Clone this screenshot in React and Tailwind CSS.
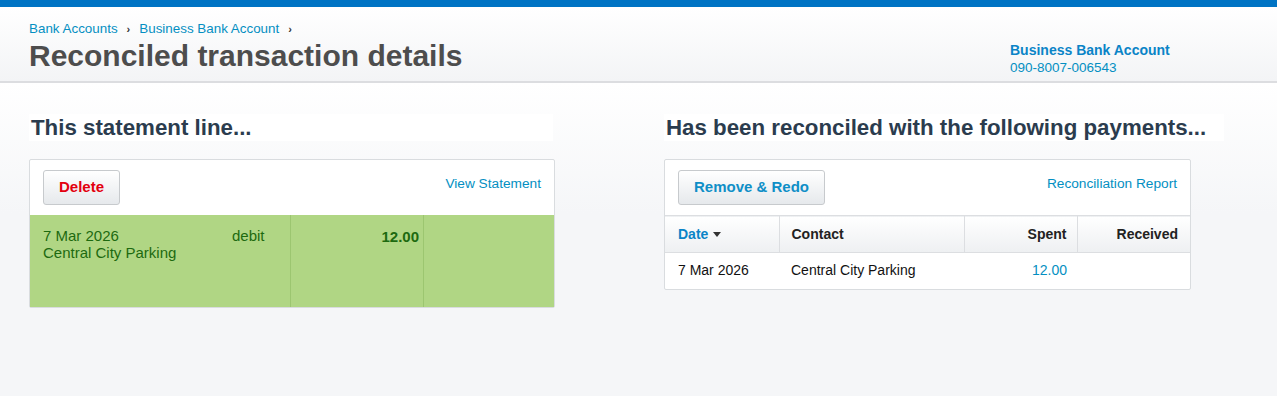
import { useState } from 'react';

const SANS = { fontFamily: '"Liberation Sans", Arial, sans-serif' };

function Breadcrumb() {
  return (
    <div className="flex items-center text-[13.4px] text-[#048fc2] leading-[16px]">
      <a className="hover:underline" href="#">Bank Accounts</a>
      <span className="mx-[9px] text-[#333] text-[11px] font-bold">›</span>
      <a className="hover:underline" href="#">Business Bank Account</a>
      <span className="mx-[9px] text-[#333] text-[11px] font-bold">›</span>
    </div>
  );
}

function Button({ children, color }) {
  return (
    <button
      className={`h-[35px] px-[15px] rounded-[3px] border border-[#c7cacd] bg-gradient-to-b from-white to-[#e6e9ec] text-[15px] font-bold ${color}`}
    >
      {children}
    </button>
  );
}

export default function App() {
  const [sortDesc] = useState(true);

  return (
    <div className="min-h-[396px] bg-[#f5f6f8]" style={SANS}>
      <div className="h-[7px] bg-[#0074c4]" />

      {/* Page header */}
      <div className="h-[76px] border-b-2 border-[#dcdde0] bg-gradient-to-b from-white to-[#f3f4f6] flex justify-between">
        <div className="pl-[29px] pt-[14px]">
          <Breadcrumb />
          <h1 className="mt-[2px] text-[30px] font-bold leading-[34px] text-[#4d4d4d]">
            Reconciled transaction details
          </h1>
        </div>
        <div className="w-[267px] pt-[34px] leading-[18px] text-[#048fc2]">
          <p className="font-bold text-[14px] text-[#0a84c7]">Business Bank Account</p>
          <p className="text-[13.5px]">090-8007-006543</p>
        </div>
      </div>

      <div className="h-[313px] bg-[linear-gradient(to_bottom,#ffffff,#f5f6f8_130px)] flex gap-[109px] pl-[29px] pt-[31px]">
        {/* Statement line */}
        <div className="w-[526px]">
          <div className="bg-white w-[524px] h-[27px] pl-[2px] flex items-center">
            <h2 className="text-[22.3px] font-bold text-[#2b3c4e]">This statement line...</h2>
          </div>
          <div className="mt-[18px] border border-[#d9dcdf] rounded-[2px] bg-white">
            <div className="h-[55px] flex justify-between items-start px-[13px] pt-[10px]">
              <Button color="text-[#e3000f]">Delete</Button>
              <a href="#" className="mt-[4px] text-[13.7px] text-[#048fc2]">View Statement</a>
            </div>
            <div className="h-[92px] bg-[#b0d684] flex text-[#1d6a10] text-[15px] leading-[17px]">
              <div className="w-[261px] border-r border-[#9cc670] pl-[13px] pt-[12px] flex">
                <div className="w-[189px]">
                  <p>7 Mar 2026</p>
                  <p>Central City Parking</p>
                </div>
                <p>debit</p>
              </div>
              <div className="w-[133px] border-r border-[#9cc670] pr-[4px] pt-[13px] text-right font-bold text-[15px]">
                12.00
              </div>
              <div className="flex-1" />
            </div>
          </div>
        </div>

        {/* Reconciled payments */}
        <div className="w-[527px]">
          <div className="bg-white w-[560px] h-[27px] pl-[2px] flex items-center">
            <h2 className="text-[22.3px] font-bold text-[#2b3c4e] whitespace-nowrap">
              Has been reconciled with the following payments...
            </h2>
          </div>
          <div className="mt-[18px] border border-[#d9dcdf] rounded-[2px] bg-white">
            <div className="h-[55px] flex justify-between items-start px-[13px] pt-[10px]">
              <Button color="text-[#0f8fc7]">Remove &amp; Redo</Button>
              <a href="#" className="mt-[4px] text-[13.7px] text-[#048fc2]">Reconciliation Report</a>
            </div>
            <table className="w-full border-collapse text-[14px]">
              <thead>
                <tr className="h-[37px] bg-gradient-to-b from-white to-[#eef0f2] border-y border-[#dcdee1]">
                  <th className="w-[114px] pl-[13px] text-left font-bold text-[#0a84c7]">
                    Date <span className="inline-block align-middle ml-[1px] w-0 h-0 border-x-[4px] border-x-transparent border-t-[5px] border-t-[#333]" />
                    {sortDesc ? null : null}
                  </th>
                  <th className="w-[185px] pl-[12px] text-left font-bold text-[#222] border-l border-[#dcdee1]">Contact</th>
                  <th className="w-[113px] pr-[10px] text-right font-bold text-[#222] border-l border-[#dcdee1]">Spent</th>
                  <th className="pr-[12px] text-right font-bold text-[#222] border-l border-[#dcdee1]">Received</th>
                </tr>
              </thead>
              <tbody>
                <tr className="h-[36px]">
                  <td className="pl-[13px] text-[#111]">7 Mar 2026</td>
                  <td className="pl-[12px] text-[#111]">Central City Parking</td>
                  <td className="pr-[10px] text-right text-[#048fc2]">12.00</td>
                  <td />
                </tr>
              </tbody>
            </table>
          </div>
        </div>
      </div>
    </div>
  );
}
